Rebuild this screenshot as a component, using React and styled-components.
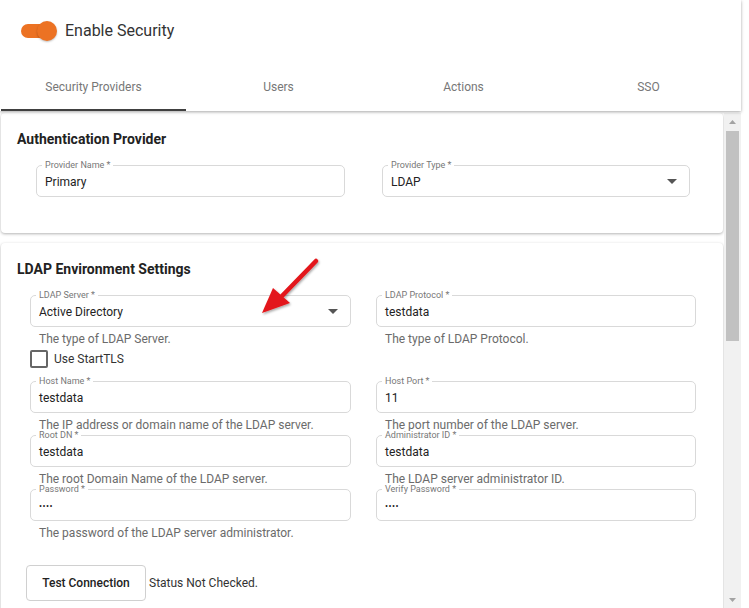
import React from "react";
import styled, { createGlobalStyle } from "styled-components";

const GlobalStyle = createGlobalStyle`
    html, body {
        margin: 0;
        padding: 0;
        background: #ffffff;
    }
    body {
        font-family: Roboto, "Liberation Sans", Arial, sans-serif;
        color: #222;
    }
`;

const tabs = ["Security Providers", "Users", "Actions", "SSO"];

const ldapRows = [
    {
        left: { label: "Host Name *", value: "testdata", help: "The IP address or domain name of the LDAP server." },
        right: { label: "Host Port *", value: "11", help: "The port number of the LDAP server." },
    },
    {
        left: { label: "Root DN *", value: "testdata", help: "The root Domain Name of the LDAP server." },
        right: { label: "Administrator ID *", value: "testdata", help: "The LDAP server administrator ID." },
    },
    {
        left: { label: "Password *", value: "••••", help: "The password of the LDAP server administrator.", secret: true },
        right: { label: "Verify Password *", value: "••••", secret: true },
    },
];

const Caret = () => (
    <svg width="10" height="5" viewBox="0 0 10 5">
        <path d="M0 0 L10 0 L5 5 Z" fill="#555" />
    </svg>
);

const Arrow = ({ down }) => (
    <svg width="7" height="4" viewBox="0 0 7 4">
        <path d={down ? "M0 0 L7 0 L3.5 4 Z" : "M0 4 L7 4 L3.5 0 Z"} fill="#a3a3a3" />
    </svg>
);

const FieldBlock = ({ label, value, help, select, secret }) => (
    <FieldWrap>
        <Field>
            <FieldLabel>{label}</FieldLabel>
            <Value $secret={secret}>{value}</Value>
            {select && <Caret />}
        </Field>
        {help && <Help>{help}</Help>}
    </FieldWrap>
);

const App = () => {
    return (
        <>
            <GlobalStyle />
            <Page>
                <Header>
                    <ToggleRow>
                        <Switch>
                            <Track />
                            <Thumb />
                        </Switch>
                        <ToggleText>Enable Security</ToggleText>
                    </ToggleRow>
                    <Tabs>
                        {tabs.map((t, i) => (
                            <Tab key={t} $active={i === 0}>
                                {t}
                            </Tab>
                        ))}
                    </Tabs>
                </Header>

                <Body>
                    <Content>
                        <Card>
                            <CardTitle>Authentication Provider</CardTitle>
                            <ProviderGrid>
                                <FieldBlock label="Provider Name *" value="Primary" />
                                <FieldBlock label="Provider Type *" value="LDAP" select />
                            </ProviderGrid>
                        </Card>

                        <Card $tall>
                            <CardTitle>LDAP Environment Settings</CardTitle>
                            <LdapGrid>
                                <div>
                                    <FieldBlock
                                        label="LDAP Server *"
                                        value="Active Directory"
                                        help="The type of LDAP Server."
                                        select
                                    />
                                    <CheckRow>
                                        <CheckBox />
                                        <span>Use StartTLS</span>
                                    </CheckRow>
                                </div>
                                <FieldBlock label="LDAP Protocol *" value="testdata" help="The type of LDAP Protocol." />
                                {ldapRows.map((row, i) => (
                                    <React.Fragment key={i}>
                                        <FieldBlock {...row.left} />
                                        <FieldBlock {...row.right} />
                                    </React.Fragment>
                                ))}
                            </LdapGrid>
                            <ActionRow>
                                <Button>Test Connection</Button>
                                <Status>Status Not Checked.</Status>
                            </ActionRow>
                        </Card>
                    </Content>

                    <ScrollBar>
                        <ScrollButton>
                            <Arrow />
                        </ScrollButton>
                        <ScrollThumb />
                        <ScrollButton $bottom>
                            <Arrow down />
                        </ScrollButton>
                    </ScrollBar>
                </Body>

                <Pointer width="70" height="70" viewBox="0 0 70 70">
                    <defs>
                        <filter id="sh" x="-20%" y="-20%" width="140%" height="140%">
                            <feDropShadow dx="1" dy="1.5" stdDeviation="1.2" floodColor="#000" floodOpacity="0.35" />
                        </filter>
                    </defs>
                    <g filter="url(#sh)">
                        <path d="M61 6 L27 41" stroke="#e3151a" strokeWidth="4.5" strokeLinecap="round" />
                        <path d="M7 58 L18 33 L35 48 Z" fill="#e3151a" />
                    </g>
                </Pointer>
            </Page>
        </>
    );
};

export default App;

const Page = styled.div`
    position: relative;
    width: 749px;
    height: 608px;
    overflow: hidden;
    display: flex;
    flex-direction: column;
    background: #fff;
`;

const Header = styled.div`
    width: 741px;
    height: 111px;
    flex-shrink: 0;
    display: flex;
    flex-direction: column;
    background: #fff;
    box-shadow: 0 1px 3px rgba(0, 0, 0, 0.35);
    position: relative;
    z-index: 1;
`;

const ToggleRow = styled.div`
    display: flex;
    align-items: center;
    gap: 8px;
    padding: 20px 0 0 21px;
    height: 21px;
`;

const Switch = styled.div`
    position: relative;
    width: 36px;
    height: 20px;
    display: flex;
    align-items: center;
`;

const Track = styled.div`
    width: 32px;
    height: 14px;
    border-radius: 7px;
    background: #ec7223;
`;

const Thumb = styled.div`
    position: absolute;
    right: 0;
    top: 0;
    width: 20px;
    height: 20px;
    border-radius: 50%;
    background: #ec7223;
    box-shadow: 0 1px 2px rgba(0, 0, 0, 0.25);
`;

const ToggleText = styled.span`
    font-size: 16px;
    color: #333;
`;

const Tabs = styled.div`
    margin-top: auto;
    display: grid;
    grid-template-columns: repeat(4, 185px);
    padding-left: 1px;
`;

const Tab = styled.div`
    height: 48px;
    box-sizing: border-box;
    display: flex;
    align-items: center;
    justify-content: center;
    padding-top: 2px;
    font-size: 12px;
    color: #777;
    border-bottom: 2px solid ${(p) => (p.$active ? "#404040" : "transparent")};
`;

const Body = styled.div`
    display: flex;
    width: 741px;
    flex: 1;
    min-height: 0;
    margin-top: 2px;
`;

const Content = styled.div`
    width: 724px;
    overflow: hidden;
`;

const ScrollBar = styled.div`
    width: 17px;
    background: #f1f1f1;
    display: flex;
    flex-direction: column;
`;

const ScrollButton = styled.div`
    height: 17px;
    display: flex;
    align-items: center;
    justify-content: center;
    margin-top: ${(p) => (p.$bottom ? "auto" : "0")};
`;

const ScrollThumb = styled.div`
    height: 210px;
    margin: 1px 2px 0;
    background: #c1c1c1;
`;

const Card = styled.section`
    margin: 0 1px 10px;
    padding: 16px 0 ${(p) => (p.$tall ? "200px" : "36px")};
    background: #fff;
    border-radius: 4px;
    box-shadow: 0 1px 3px rgba(0, 0, 0, 0.3);
`;

const CardTitle = styled.h2`
    margin: 0 0 16px 16px;
    font-size: 14px;
    line-height: 20px;
    font-weight: 700;
    color: #222;
`;

const ProviderGrid = styled.div`
    display: grid;
    grid-template-columns: 309px 308px;
    column-gap: 37px;
    padding-left: 35px;
`;

const LdapGrid = styled.div`
    display: grid;
    grid-template-columns: 321px 320px;
    column-gap: 25px;
    row-gap: 4px;
    padding-left: 29px;
    align-items: start;
`;

const FieldWrap = styled.div`
    display: flex;
    flex-direction: column;
`;

const Field = styled.div`
    position: relative;
    height: 32px;
    box-sizing: border-box;
    border: 1px solid #d9d9d9;
    border-radius: 5px;
    padding: 0 12px 0 8px;
    display: flex;
    align-items: center;
    justify-content: space-between;
`;

const FieldLabel = styled.span`
    position: absolute;
    top: -5px;
    left: 5px;
    padding: 0 3px;
    background: #fff;
    font-size: 9px;
    line-height: 9px;
    color: #777;
`;

const Value = styled.span`
    font-size: ${(p) => (p.$secret ? "9px" : "12px")};
    letter-spacing: ${(p) => (p.$secret ? "0.5px" : "0")};
    color: #222;
    padding-top: 2px;
`;

const Help = styled.div`
    margin-top: 6px;
    padding-left: 9px;
    font-size: 12px;
    line-height: 12px;
    color: #6b6b6b;
`;

const CheckRow = styled.label`
    display: flex;
    align-items: center;
    gap: 6px;
    margin-top: 5px;
    padding-bottom: 9px;
    height: 18px;
    font-size: 12px;
    color: #333;
`;

const CheckBox = styled.span`
    width: 14px;
    height: 14px;
    border: 2px solid #666;
    border-radius: 2px;
`;

const ActionRow = styled.div`
    display: flex;
    align-items: center;
    gap: 3px;
    margin-top: 26px;
    padding-left: 25px;
`;

const Button = styled.button`
    width: 120px;
    height: 36px;
    background: #fff;
    border: 1px solid #d0d0d0;
    border-radius: 4px;
    font-family: Roboto, "Liberation Sans", Arial, sans-serif;
    font-size: 12px;
    font-weight: 500;
    color: #222;
`;

const Status = styled.span`
    font-size: 12px;
    color: #333;
`;

const Pointer = styled.svg`
    position: absolute;
    left: 255px;
    top: 255px;
    pointer-events: none;
`;
